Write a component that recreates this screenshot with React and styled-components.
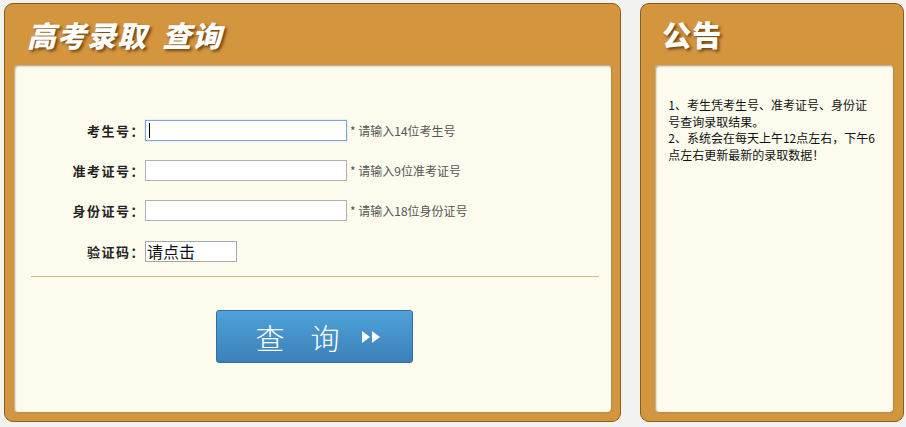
import React from 'react';
import styled, { createGlobalStyle } from 'styled-components';

const GlobalStyle = createGlobalStyle`
  html, body {
    margin: 0;
    padding: 0;
  }
  body {
    background: #f2f2ee;
    font-family: "Noto Sans CJK SC", "Liberation Sans", sans-serif;
    width: 906px;
    height: 427px;
    overflow: hidden;
  }
`;

const Page = styled.div`
  display: flex;
  gap: 19px;
  padding: 3px 2px 0 4px;
`;

const Panel = styled.section`
  box-sizing: border-box;
  width: ${(p) => p.width}px;
  height: 419px;
  background: #d4953f;
  border: 1px solid #8c5c1c;
  border-radius: 9px;
  display: flex;
  flex-direction: column;
  padding: 0 ${(p) => p.padRight}px 9px ${(p) => p.padLeft}px;
`;

const PanelTitle = styled.h1`
  margin: 0;
  height: 61px;
  box-sizing: border-box;
  padding: 9px 0 0 ${(p) => p.indent}px;
  font-size: 29px;
  font-weight: 900;
  font-style: ${(p) => (p.italic ? 'italic' : 'normal')};
  color: #fff;
  letter-spacing: 1px;
  text-shadow: 2px 2px 3px rgba(80, 40, 0, 0.75);
  white-space: pre;
`;

const Inner = styled.div`
  flex: 1;
  background: #fdfbee;
  border-radius: 4px;
  box-shadow: inset 1px 1px 2px #a89a80, 1px 1px 1px #b08a50;
`;

const Form = styled.div`
  padding-top: 55px;
  display: flex;
  flex-direction: column;
`;

const Row = styled.div`
  display: flex;
  align-items: center;
  height: 21px;
  margin-bottom: ${(p) => p.gap}px;
`;

const Label = styled.label`
  width: 131px;
  text-align: right;
  font-size: 13px;
  font-weight: bold;
  letter-spacing: 1.5px;
  color: #222;
`;

const Input = styled.div`
  box-sizing: border-box;
  width: 202px;
  height: 21px;
  background: #fff;
  border: 1px solid ${(p) => (p.focus ? '#7ea4e0' : '#b0b0b0')};
  box-shadow: ${(p) => (p.focus ? '0 0 1px #9bbbe8' : 'none')};
  position: relative;
`;

const Caret = styled.span`
  position: absolute;
  left: 3px;
  top: 2px;
  width: 1px;
  height: 15px;
  background: #000;
`;

const Hint = styled.span`
  margin-left: 3px;
  font-size: 12px;
  color: #555;
`;

const Captcha = styled.div`
  box-sizing: border-box;
  width: 92px;
  height: 21px;
  border: 1px solid #a8a8a8;
  background: #fff;
  font-size: 16px;
  line-height: 19px;
  color: #111;
  padding-left: 1px;
`;

const Divider = styled.hr`
  margin: -5px 12px 0 17px;
  border: 0;
  border-top: 1px solid #cbbd88;
`;

const ButtonWrap = styled.div`
  display: flex;
  padding: 33px 0 0 202px;
`;

const Button = styled.button`
  box-sizing: border-box;
  width: 197px;
  height: 53px;
  border: 1px solid #336d9c;
  border-radius: 3px;
  background: linear-gradient(#4fa2da, #3b80b8);
  color: #fff;
  font-family: "Noto Sans CJK SC", sans-serif;
  font-weight: 300;
  font-size: 29px;
  letter-spacing: 26px;
  display: flex;
  align-items: center;
  justify-content: center;
  padding: 0 0 0 10px;
  cursor: pointer;
`;

const Arrows = styled.svg`
  margin-left: -6px;
`;

const Notice = styled.div`
  width: 210px;
  padding: 32px 0 0 13px;
  font-size: 12px;
  line-height: 16.5px;
  color: #111;
`;

const fields = [
  { label: '考生号：', hint: '* 请输入14位考生号', focus: true, gap: 19 },
  { label: '准考证号：', hint: '* 请输入9位准考证号', gap: 19 },
  { label: '身份证号：', hint: '* 请输入18位身份证号', gap: 20 },
];

export default function App() {
  return (
    <>
      <GlobalStyle />
      <Page>
        <Panel width={618} padLeft={9} padRight={9}>
          <PanelTitle indent={13} italic>{'高考录取  查询'}</PanelTitle>
          <Inner>
            <Form>
              {fields.map((f) => (
                <Row key={f.label} gap={f.gap}>
                  <Label>{f.label}</Label>
                  <Input focus={f.focus}>{f.focus && <Caret />}</Input>
                  <Hint>{f.hint}</Hint>
                </Row>
              ))}
              <Row gap={19}>
                <Label>验证码：</Label>
                <Captcha>请点击</Captcha>
              </Row>
              <Divider />
              <ButtonWrap>
                <Button>
                  查询
                  <Arrows width="24" height="16" viewBox="0 0 24 16">
                    <polygon points="2,2 10,8 2,14" fill="#fff" />
                    <polygon points="12,2 20,8 12,14" fill="#fff" />
                  </Arrows>
                </Button>
              </ButtonWrap>
            </Form>
          </Inner>
        </Panel>
        <Panel width={264} padLeft={14} padRight={10}>
          <PanelTitle indent={7}>公告</PanelTitle>
          <Inner>
            <Notice>
              1、考生凭考生号、准考证号、身份证号查询录取结果。
              <br />
              2、系统会在每天上午12点左右，下午6点左右更新最新的录取数据！
            </Notice>
          </Inner>
        </Panel>
      </Page>
    </>
  );
}
